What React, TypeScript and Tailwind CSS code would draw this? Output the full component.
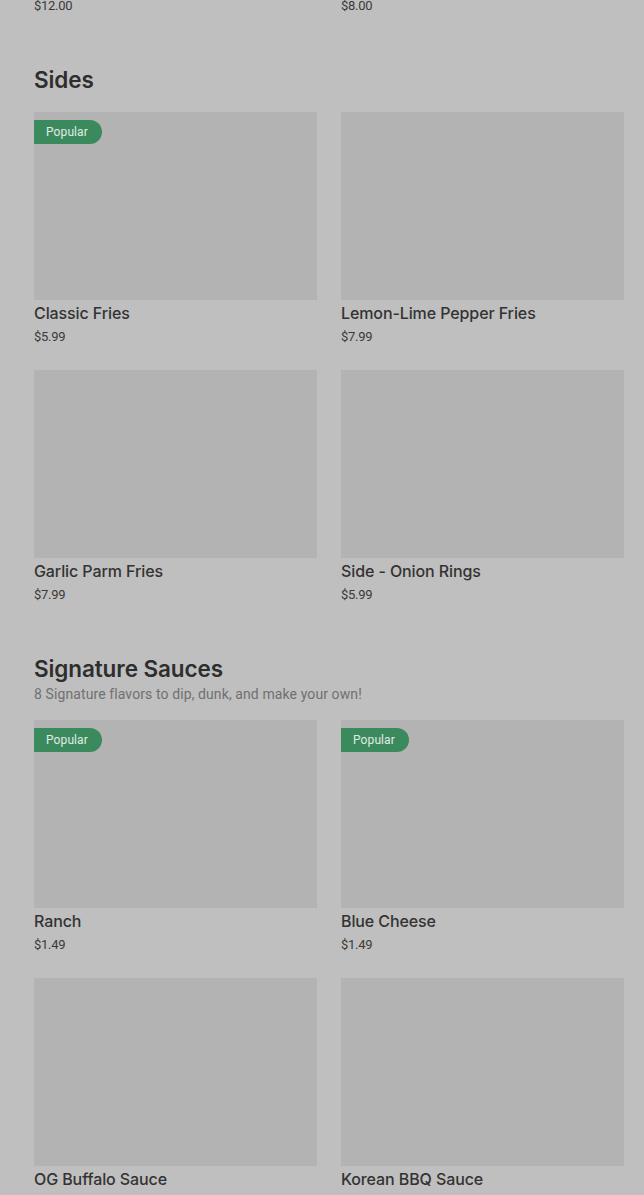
import React from "react";

type Item = { name: string; price: string; popular?: boolean };

function Card({ item }: { item: Item }) {
  return (
    <div className="flex flex-col">
      <div className="relative h-[188px] w-full bg-[#b3b3b3]">
        {item.popular && (
          <span className="absolute left-0 top-2 flex h-6 items-center rounded-r-full bg-[#3b8a5d] pl-3 pr-[14px] text-[12px] tracking-[0.1px] text-[#e2ebe5] font-['Roboto',sans-serif]">
            Popular
          </span>
        )}
      </div>
      <div className="mt-px h-6 text-[16px] leading-6 font-medium text-[#333333] font-['Inter',sans-serif] tracking-[-0.1px]">
        {item.name}
      </div>
      <div className="mt-0.5 h-5 text-[13px] leading-5 text-[#3a3a3a] font-['Roboto',sans-serif] tracking-[-0.3px]">
        {item.price}
      </div>
    </div>
  );
}

function Section({ title, desc, items }: { title: string; desc?: string; items: Item[] }) {
  return (
    <section className="mt-[47px]">
      <h2 className="h-8 pt-px text-[22.5px] leading-8 font-semibold tracking-[-0.1px] text-[#2e2e2e] font-['Inter',sans-serif]">
        {title}
      </h2>
      {desc && (
        <p className="h-[19px] text-[14px] leading-5 tracking-[0.1px] text-[#707070] font-['Roboto',sans-serif]">{desc}</p>
      )}
      <div className="mt-[17px] grid grid-cols-2 gap-x-6 gap-y-[23px]">
        {items.map((it) => (
          <Card key={it.name} item={it} />
        ))}
      </div>
    </section>
  );
}

export default function App() {
  return (
    <div className="min-h-[1195px] w-full overflow-hidden bg-[#bfbfbf]">
      <div className="mt-[-4px] pl-[34px] pr-[20px]">
        <div className="grid grid-cols-2 gap-x-6">
          <div className="h-5 text-[13px] leading-5 text-[#3a3a3a] font-['Roboto',sans-serif] tracking-[-0.3px]">$12.00</div>
          <div className="h-5 text-[13px] leading-5 text-[#3a3a3a] font-['Roboto',sans-serif] tracking-[-0.3px]">$8.00</div>
        </div>
        <Section
          title="Sides"
          items={[
            { name: "Classic Fries", price: "$5.99", popular: true },
            { name: "Lemon-Lime Pepper Fries", price: "$7.99" },
            { name: "Garlic Parm Fries", price: "$7.99" },
            { name: "Side - Onion Rings", price: "$5.99" },
          ]}
        />
        <Section
          title="Signature Sauces"
          desc="8 Signature flavors to dip, dunk, and make your own!"
          items={[
            { name: "Ranch", price: "$1.49", popular: true },
            { name: "Blue Cheese", price: "$1.49", popular: true },
            { name: "OG Buffalo Sauce", price: "$1.49" },
            { name: "Korean BBQ Sauce", price: "$1.49" },
          ]}
        />
      </div>
    </div>
  );
}
